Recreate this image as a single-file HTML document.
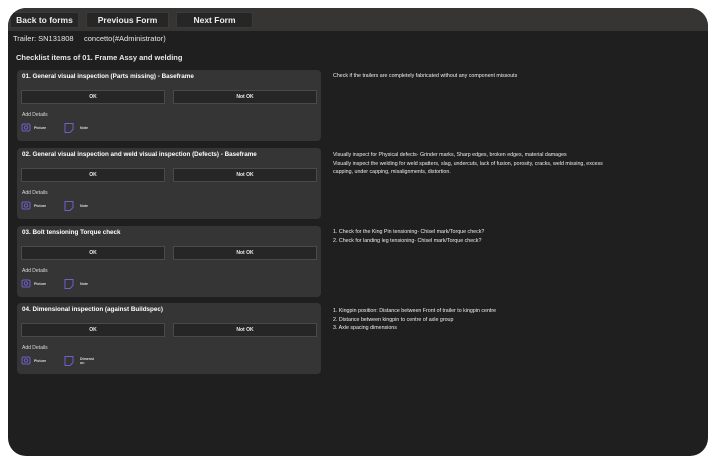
<!DOCTYPE html><html><head><style>
*{margin:0;padding:0;box-sizing:border-box}
body{width:716px;height:464px;background:#fff;font-family:"Segoe UI","Liberation Sans",sans-serif;position:relative;overflow:hidden}
.win{position:absolute;left:8px;top:8px;width:700px;height:448px;background:#1f1f1f;border-radius:18px;overflow:hidden}
.bar{position:absolute;left:0;top:0;width:700px;height:23px;background:#373533}
.btn{position:absolute;top:4px;height:16px;background:#262626;border:1px solid #3a3a3a;color:#eee;font-size:8.5px;line-height:14px;text-align:center;font-weight:600}
.t{position:absolute;color:#e8e8e8;white-space:nowrap}
.card{position:absolute;left:9px;width:304px;height:71px;background:#353535;border-radius:4px}
.card .h{position:absolute;left:5px;top:3px;font-size:6.3px;font-weight:bold;color:#fff;white-space:nowrap}
.ok{position:absolute;top:20px;width:144px;height:14px;background:#262626;border:1px solid #4a4a4a;color:#eee;font-size:5px;font-weight:bold;text-align:center;line-height:12px}
.ad{position:absolute;left:5px;top:42px;font-size:5px;color:#ddd}
.ic{position:absolute;top:52px}
.lb{position:absolute;top:56px;font-size:3.6px;color:#ddd;font-weight:bold;line-height:4px}
.d{position:absolute;left:325px;font-size:5.3px;color:#eee;line-height:8.6px;white-space:nowrap}
</style></head><body>
<div class="win">
<div class="bar"></div>
<div class="btn" style="left:2px;width:69px">Back to forms</div>
<div class="btn" style="left:78px;width:83px">Previous Form</div>
<div class="btn" style="left:168px;width:77px">Next Form</div>
<div class="t" style="left:5px;top:26px;font-size:7.5px">Trailer: SN131808 &nbsp;&nbsp;&nbsp; concetto(#Administrator)</div>
<div class="t" style="left:8px;top:45px;font-size:7.5px;font-weight:600">Checklist items of 01. Frame Assy and welding</div>

<div class="card" style="top:62px"><div class="h">01. General visual inspection (Parts missing) - Baseframe</div>
<div class="ok" style="left:4px">OK</div><div class="ok" style="left:156px">Not OK</div>
<div class="ad">Add Details</div>
<svg class="ic" style="left:4px" width="10" height="10" viewBox="0 0 10 10"><rect x="1" y="2" width="8" height="7" rx="1.5" fill="none" stroke="#7060c8" stroke-width="1"/><circle cx="5" cy="5.5" r="1.7" fill="none" stroke="#7060c8"/></svg><div class="lb" style="left:17px">Picture</div>
<svg class="ic" style="left:46px" width="12" height="12" viewBox="0 0 12 12"><path d="M2 1.5h8v6l-3 3H2z" fill="none" stroke="#7060c8" stroke-width="1"/></svg><div class="lb" style="left:63px">Note</div></div>

<div class="card" style="top:140px"><div class="h">02. General visual inspection and weld visual inspection (Defects) - Baseframe</div>
<div class="ok" style="left:4px">OK</div><div class="ok" style="left:156px">Not OK</div>
<div class="ad">Add Details</div>
<svg class="ic" style="left:4px" width="10" height="10" viewBox="0 0 10 10"><rect x="1" y="2" width="8" height="7" rx="1.5" fill="none" stroke="#7060c8"/><circle cx="5" cy="5.5" r="1.7" fill="none" stroke="#7060c8"/></svg><div class="lb" style="left:17px">Picture</div>
<svg class="ic" style="left:46px" width="12" height="12" viewBox="0 0 12 12"><path d="M2 1.5h8v6l-3 3H2z" fill="none" stroke="#7060c8"/></svg><div class="lb" style="left:63px">Note</div></div>

<div class="card" style="top:218px"><div class="h">03. Bolt tensioning Torque check</div>
<div class="ok" style="left:4px">OK</div><div class="ok" style="left:156px">Not OK</div>
<div class="ad">Add Details</div>
<svg class="ic" style="left:4px" width="10" height="10" viewBox="0 0 10 10"><rect x="1" y="2" width="8" height="7" rx="1.5" fill="none" stroke="#7060c8"/><circle cx="5" cy="5.5" r="1.7" fill="none" stroke="#7060c8"/></svg><div class="lb" style="left:17px">Picture</div>
<svg class="ic" style="left:46px" width="12" height="12" viewBox="0 0 12 12"><path d="M2 1.5h8v6l-3 3H2z" fill="none" stroke="#7060c8"/></svg><div class="lb" style="left:63px">Note</div></div>

<div class="card" style="top:295px"><div class="h">04. Dimensional inspection (against Buildspec)</div>
<div class="ok" style="left:4px">OK</div><div class="ok" style="left:156px">Not OK</div>
<div class="ad">Add Details</div>
<svg class="ic" style="left:4px" width="10" height="10" viewBox="0 0 10 10"><rect x="1" y="2" width="8" height="7" rx="1.5" fill="none" stroke="#7060c8"/><circle cx="5" cy="5.5" r="1.7" fill="none" stroke="#7060c8"/></svg><div class="lb" style="left:17px">Picture</div>
<svg class="ic" style="left:46px" width="12" height="12" viewBox="0 0 12 12"><path d="M2 1.5h8v6l-3 3H2z" fill="none" stroke="#7060c8"/></svg><div class="lb" style="left:63px;top:54px">Dimensi<br>on</div></div>

<div class="d" style="top:64px">Check if the trailers are completely fabricated without any component missouts</div>
<div class="d" style="top:143px">Visually inspect for Physical defects- Grinder marks, Sharp edges, broken edges, material damages<br>Visually inspect the welding for weld spatters, slag, undercuts, lack of fusion, porosity, cracks, weld missing, excess<br>capping, under capping, misalignments, distortion.</div>
<div class="d" style="top:220px">1. Check for the King Pin tensioning- Chisel mark/Torque check?<br>2. Check for landing leg tensioning- Chisel mark/Torque check?</div>
<div class="d" style="top:299px">1. Kingpin position: Distance between Front of trailer to kingpin centre<br>2. Distance between kingpin to centre of axle group<br>3. Axle spacing dimensions</div>
</div>
</body></html>
